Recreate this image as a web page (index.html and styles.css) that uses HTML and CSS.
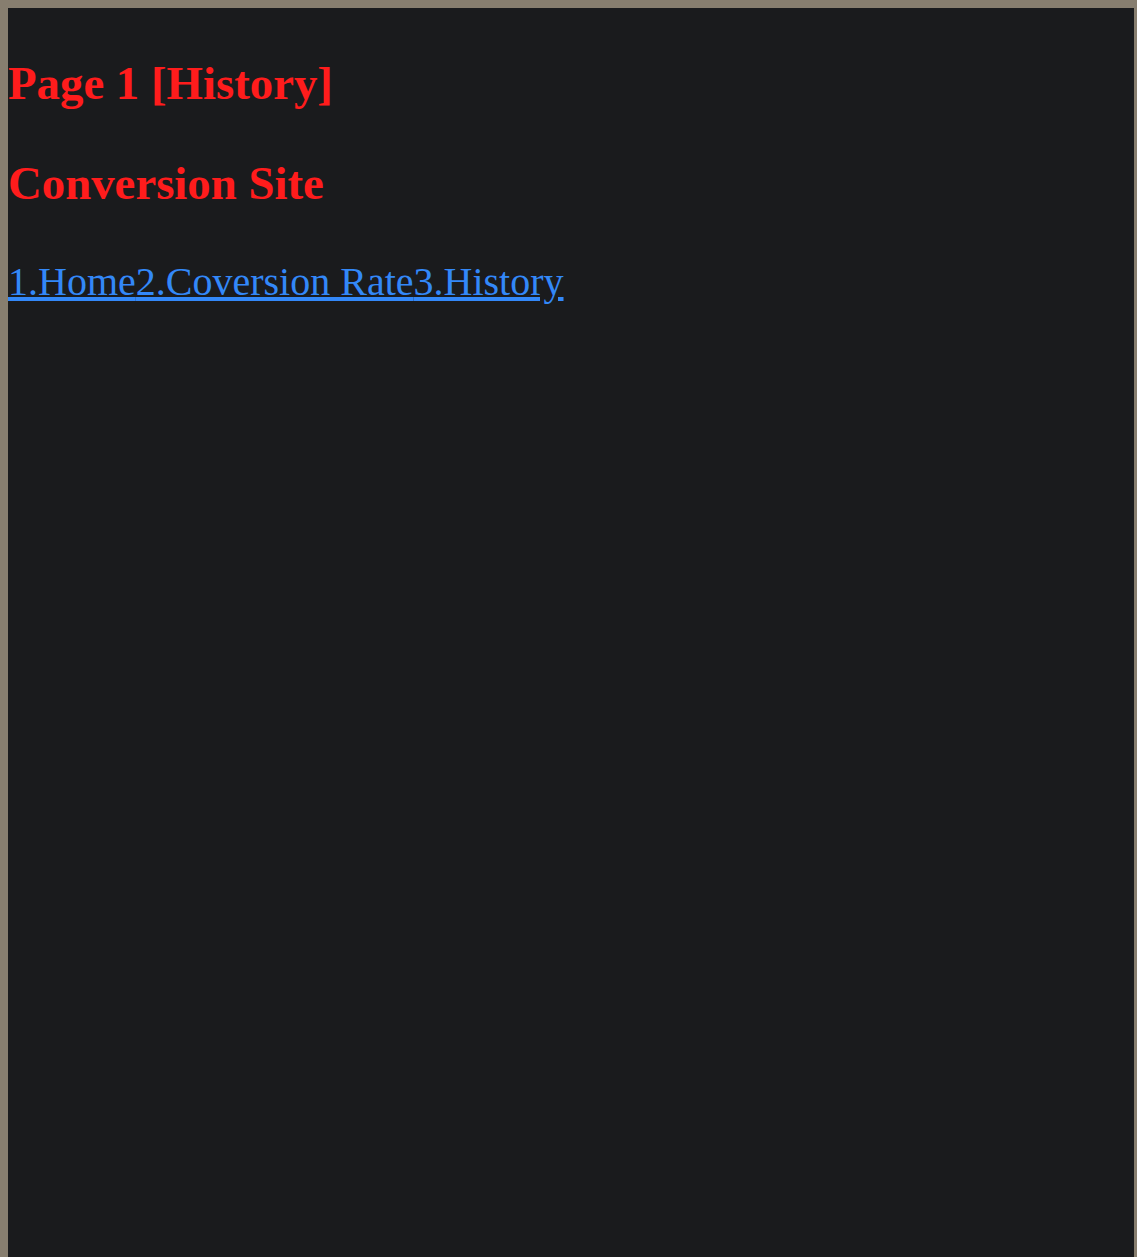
FILE: index.html
```html
<!DOCTYPE html>
<html>
<head>
<meta charset="utf-8">
<title>Page 1 [History]</title>
<link rel="stylesheet" href="styles.css">
</head>
<body>
<div class="page">
<h1 class="title">Page 1 [History]</h1>
<h2 class="subtitle">Conversion Site</h2>
<nav class="nav"><a href="#" class="nav-link">1.Home</a><a href="#" class="nav-link">2.Coversion Rate</a><a href="#" class="nav-link">3.History</a></nav>
</div>
</body>
</html>
```
FILE: styles.css
```css
html {
  background: #877e6f;
}
body {
  margin: 8px 3px 0 8px;
  font-family: "Liberation Serif", "Times New Roman", serif;
}
.page {
  display: flow-root;
  background: #1a1b1d;
  min-height: calc(100vh - 8px);
}
.title,
.subtitle {
  font-size: 46.8px;
  font-weight: bold;
  color: #ff1c1c;
  margin: 46px 0;
  line-height: normal;
}
.title {
  margin-top: 48px;
}
.subtitle {
  margin-bottom: 48px;
}
.nav {
  font-size: 40px;
}
.nav-link {
  color: #3388f8;
  text-decoration: underline;
}
```
